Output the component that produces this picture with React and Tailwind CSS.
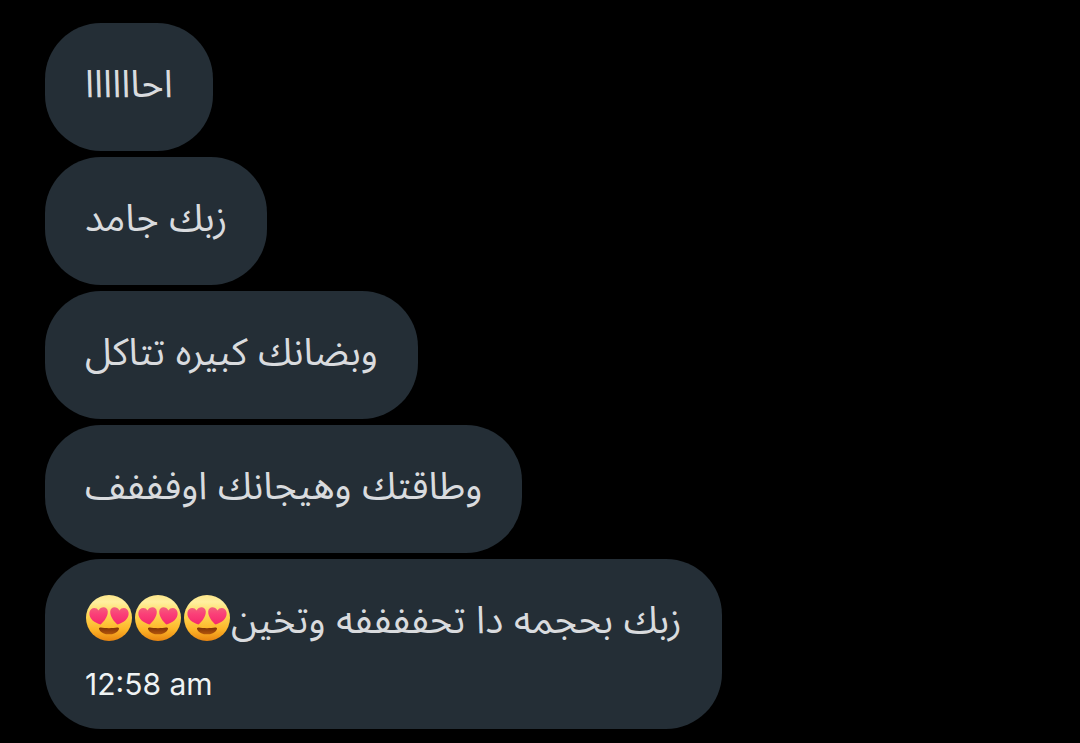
import { memo } from "react";

const messages = [
  { id: 1, text: `اح${"ا".repeat(6)}` },
  { id: 2, text: "زبك جامد" },
  { id: 3, text: "وبضانك كبيره تتاكل" },
  { id: 4, text: `وطاقتك وهيجانك او${"ف".repeat(4)}` },
  { id: 5, text: `زبك بحجمه دا تح${"ف".repeat(4)}ه وتخين`, hearts: 3, time: "12:58 am" },
];

const HeartEyes = () => (
  <svg viewBox="0 0 48 48" className="size-12" role="img" aria-label="😍">
    <defs>
      <linearGradient id="face" x1="0" y1="0" x2="0" y2="1">
        <stop offset="0" stopColor="#fde68a" />
        <stop offset="0.15" stopColor="#fff0a0" />
        <stop offset="0.45" stopColor="#fed552" />
        <stop offset="0.75" stopColor="#fdb528" />
        <stop offset="1" stopColor="#e88410" />
      </linearGradient>
      <linearGradient id="heart" x1="0" y1="0" x2="0" y2="1">
        <stop offset="0" stopColor="#f2607c" />
        <stop offset="0.4" stopColor="#fb3f78" />
        <stop offset="1" stopColor="#f5286c" />
      </linearGradient>
      <linearGradient id="mouth" x1="0" y1="0" x2="0" y2="1">
        <stop offset="0" stopColor="#7d3206" />
        <stop offset="1" stopColor="#b4560c" />
      </linearGradient>
    </defs>
    <circle cx="24" cy="24" r="23" fill="url(#face)" />
    <path
      d="M15.8 33.6 C20 34.4 28 34.4 32.2 33.6 C33.8 33.4 34.4 34.4 33.8 35.4 C30.5 42 17.5 42 14.2 35.4 C13.6 34.4 14.2 33.4 15.8 33.6Z"
      fill="url(#mouth)"
    />
    <path
      d="M15.4 30.6 C10 28.8 3.8 25.2 4.4 18.8 C4.9 13.8 11 12.4 13.6 16.6 C16 11.6 22.8 12.4 22.8 17.8 C22.8 23 18.8 27.8 15.4 30.6Z"
      fill="url(#heart)"
    />
    <path
      d="M32.6 30.6 C38 28.8 44.2 25.2 43.6 18.8 C43.1 13.8 37 12.4 34.4 16.6 C32 11.6 25.2 12.4 25.2 17.8 C25.2 23 29.2 27.8 32.6 30.6Z"
      fill="url(#heart)"
    />
  </svg>
);

const Bubble = memo(({ text, hearts = 0, time }) => (
  <li className="w-fit rounded-[56px] bg-[#242e36] px-10 pt-8 pb-6">
    <p
      dir="rtl"
      lang="ar"
      className="flex h-[72px] items-start text-[38px] leading-[56px] text-[#d9dbde]"
    >
      {text}
      {hearts > 0 && (
        <span className="flex gap-px pt-[3px]">
          {Array.from({ length: hearts }, (_, i) => (
            <HeartEyes key={i} />
          ))}
        </span>
      )}
    </p>
    {time && (
      <time className="block text-[30px] leading-[42px] text-[#eff3f4]">
        {time}
      </time>
    )}
  </li>
));

Bubble.displayName = "Bubble";

export default function App() {
  return (
    <main className="min-h-screen bg-black px-[45px] pt-[23px] pb-3.5 font-['Inter','Noto_Sans_Arabic','Noto_Sans','DejaVu_Sans',sans-serif]">
      <ul className="flex flex-col gap-1.5">
        {messages.map((message) => (
          <Bubble key={message.id} {...message} />
        ))}
      </ul>
    </main>
  );
}
